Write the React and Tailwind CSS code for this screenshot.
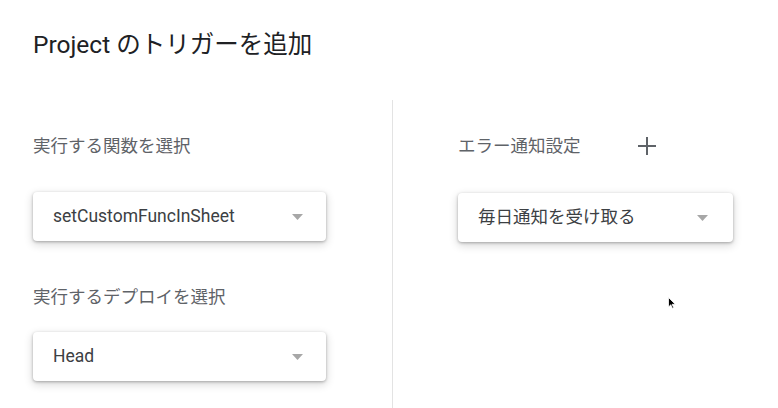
import React from 'react';

const font = { fontFamily: 'Roboto, "Noto Sans CJK JP", sans-serif' };

const Select = ({ value, width, arrowPad }) => (
  <div
    className={`flex items-center justify-between h-[49px] bg-white rounded-[4px] pl-[20px] shadow-[0_1px_3px_rgba(0,0,0,0.28),0_3px_8px_1px_rgba(0,0,0,0.14)] ${width} ${arrowPad}`}
  >
    <span className="text-[17.5px] text-[#3c4043] leading-none">{value}</span>
    <svg width="11" height="6" viewBox="0 0 11 6" className="shrink-0">
      <path d="M0 0h11L5.5 6z" fill="#a7a7a7" />
    </svg>
  </div>
);

export default function App() {
  return (
    <div className="w-[778px] h-[408px] bg-white relative overflow-hidden flex flex-col" style={font}>
      <h1 className="pl-[33px] pt-[29px] text-[24.5px] leading-[32px] text-[#202124] font-normal">
        Project のトリガーを追加
      </h1>

      <div className="flex flex-1 mt-[39px]">
        <div className="w-[392px] pl-[33px] pt-[34px] shrink-0">
          <p className="text-[17.5px] leading-[24px] text-[#5f6368]">実行する関数を選択</p>
          <div className="mt-[34px]">
            <Select value="setCustomFuncInSheet" width="w-[293px]" arrowPad="pr-[23px]" />
          </div>
          <p className="mt-[44px] text-[17.5px] leading-[24px] text-[#5f6368]">実行するデプロイを選択</p>
          <div className="mt-[23px]">
            <Select value="Head" width="w-[293px]" arrowPad="pr-[23px]" />
          </div>
        </div>

        <div className="border-l border-[#e3e3e3] pl-[65px] pt-[34px] flex-1">
          <div className="flex items-center gap-[57px] h-[24px]">
            <p className="text-[17.5px] leading-[24px] text-[#5f6368]">エラー通知設定</p>
            <svg width="18" height="18" viewBox="0 0 18 18">
              <path d="M9 0v18M0 9h18" stroke="#5f6368" strokeWidth="2" />
            </svg>
          </div>
          <div className="mt-[35px]">
            <Select value="毎日通知を受け取る" width="w-[275px]" arrowPad="pr-[25px]" />
          </div>
        </div>
      </div>

      <svg className="absolute left-[668px] top-[297px]" width="8" height="12" viewBox="0 0 8 12">
        <path d="M0.5 0.5v9.5l2.3-2.2 1.6 3.5 1.3-0.6-1.6-3.4h3.2z" fill="#000" stroke="#fff" strokeWidth="0.8" />
      </svg>
    </div>
  );
}
